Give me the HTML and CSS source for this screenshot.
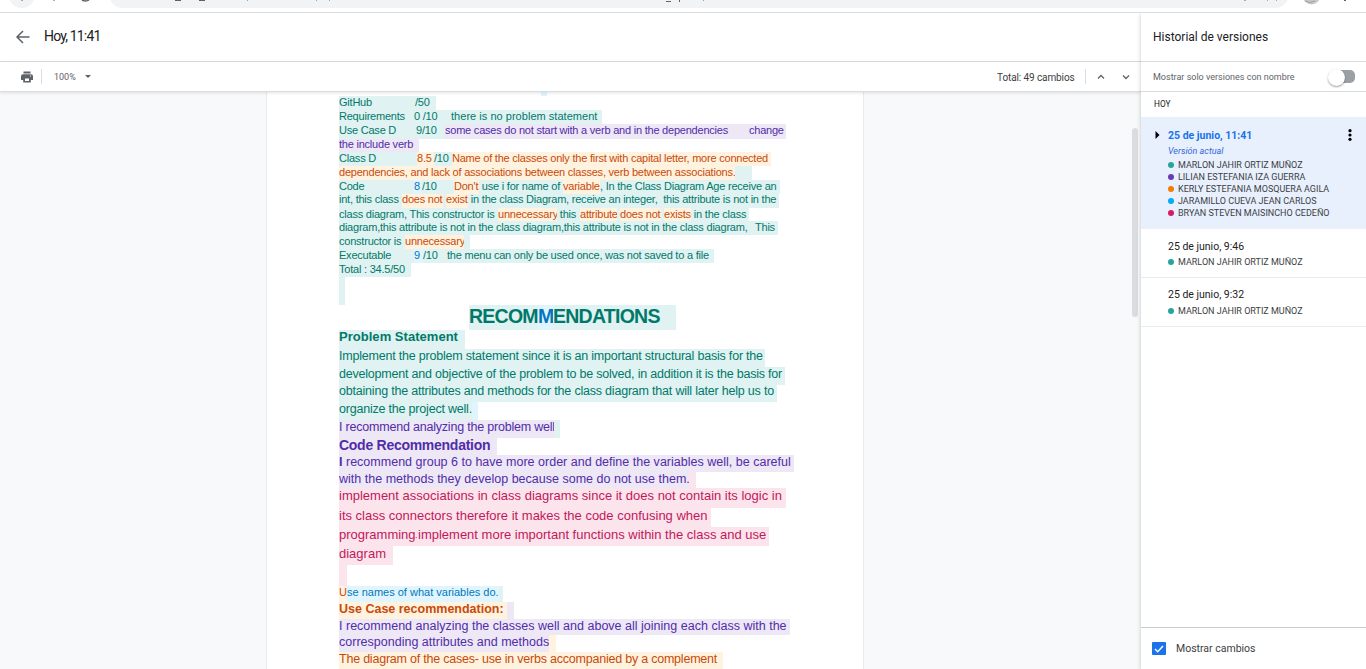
FILE: index.html
```html
<!DOCTYPE html>
<html lang="es">
<head>
<meta charset="utf-8">
<title>Historial de versiones</title>
<link rel="stylesheet" href="styles.css">
</head>
<body>
<svg class="browser" width="1366" height="13">
  <circle cx="22" cy="-5" r="13" fill="#f1f3f4"/>
  <rect x="109" y="-20" width="1180" height="28" rx="14" fill="#f1f3f4"/>
  <g fill="none" stroke="#5f6368" stroke-width="1">
    <path d="M22 0v1M54 0v1M175 0.500h5M180.500 0v1M199 0.500h5M204.500 0v1M666 1.500h5M679.500 0v2M1245 0v1M1267 0h1M1276 0h1"/>
    <path d="M82 0q4 2 7 0" stroke-width="1.500"/>
  </g>
  <path d="M247.500 0v1M316.500 0v1M329.500 0v1M703.500 0v1" stroke="#7dabd5" fill="none"/>
  <circle cx="1311.500" cy="-4" r="8.500" fill="#c4c8c9"/>
  <path d="M1305 1q5 3 10 0" stroke="#9da3a5" fill="none"/>
  <rect x="1344" y="0" width="2" height="1" fill="#5f6368"/>
</svg>
<div class="app">
  <main class="viewer">
    <header class="titlebar">
      <svg width="24" height="24" viewBox="0 0 24 24"><path d="M18.500 12H6.500M12 6l-6 6 6 6" fill="none" stroke="#5f6368" stroke-width="1.500"/></svg>
      <h1>Hoy, 11:41</h1>
    </header>
    <div class="toolbar">
      <svg class="print" width="12" height="12" viewBox="0 0 12 12"><path fill="#5f6368" d="M2.500 0.500h7v2h-7zM2 3.200h8a2 2 0 0 1 2 2V9H9.800V7H2.200v2H0V5.200a2 2 0 0 1 2-2zM2.200 7h7.600v4.500H2.200z"/><path fill="#fff" d="M4 7.500h4v2.500H4zM9 4.500h1v1H9z"/></svg>
      <i class="rule"></i>
      <span class="zoom">100%</span>
      <i class="caret"></i>
      <span class="total">Total: 49 cambios</span>
      <i class="rule"></i>
      <svg class="up" width="8" height="6" viewBox="0 0 8 6"><path d="M1 4.500l3-3 3 3" fill="none" stroke="#5f6368" stroke-width="1.300"/></svg>
      <svg class="down" width="8" height="6" viewBox="0 0 8 6"><path d="M1 1.500l3 3 3-3" fill="none" stroke="#5f6368" stroke-width="1.300"/></svg>
    </div>
    <div class="canvas">
      <article class="page">
        <p class="line first"><span></span><span class="blue"></span></p>
        <p class="line github"><span class="teal">GitHub</span><span class="teal">/50</span></p>
        <p class="line requirements"><span class="teal">Requirements</span><span class="teal">0 /10</span><span class="teal wide">there is no problem statement</span></p>
        <p class="line usecase"><span class="teal">Use Case D</span><span class="teal">9/10</span><span class="violet">some cases do not start with a verb and in the dependencies</span><span class="violet">change</span></p>
        <p class="line include"><span class="violet">the include verb</span></p>
        <p class="line classd"><span class="teal">Class D</span><span class="orange">8.5</span><span class="teal">/10</span><span class="orange">Name of the classes only the first with capital letter, more connected</span></p>
        <p class="line dependencies"><span class="orange">dependencies, and lack of associations between classes, verb between associations.</span><span class="teal"></span></p>
        <p class="line code"><span class="teal">Code</span><span class="blue">8</span><span class="teal">/10</span><span class="orange">Don't</span><span class="teal"> use i for name of </span><span class="orange">variable</span><span class="teal">, In the Class Diagram Age receive an</span></p>
        <p class="line int"><span class="teal">int, this class </span><span class="orange">does not</span><span class="teal"></span><span class="orange">exist</span><span class="teal"> in the class Diagram, receive an integer,  this attribute is not in the</span></p>
        <p class="line diagram1"><span class="teal">class diagram, This constructor is</span><span class="orange">unnecessary</span><span class="teal"> this </span><span class="orange">attribute</span><span class="teal"></span><span class="orange">does not</span><span class="teal"></span><span class="orange">exists</span><span class="teal"> in the class</span></p>
        <p class="line diagram2"><span class="teal">diagram,this attribute is not in the class diagram,this attribute is not in the class diagram,</span><span class="teal">This</span></p>
        <p class="line constructor"><span class="teal">constructor is </span><span class="orange">unnecessary</span><span class="teal"></span></p>
        <p class="line executable"><span class="teal">Executable</span><span class="blue">9</span><span class="teal">/10</span><span class="teal">the menu can only be used once, was not saved to a file</span></p>
        <p class="line sum"><span class="teal">Total : 34.5/50</span></p>
        <p class="line blank"><span class="teal"></span></p>
        <h2 class="line heading"><span></span><span class="teal">RECOM</span><span class="blue">M</span><span class="teal">ENDATIONS</span></h2>
        <h3 class="line problem"><span class="teal">Problem Statement</span></h3>
        <p class="line p1"><span class="teal">Implement the problem statement since it is an important structural basis for the</span></p>
        <p class="line p2"><span class="teal">development and objective of the problem to be solved, in addition it is the basis for</span></p>
        <p class="line p3"><span class="teal">obtaining the attributes and methods for the class diagram that will later help us to</span></p>
        <p class="line p4"><span class="teal">organize the project well.</span><span class="blue"></span></p>
        <p class="line p5"><span class="violet">I recommend analyzing the problem well</span><span class="teal"></span></p>
        <h3 class="line coderec"><span class="violet">Code Recommendation</span></h3>
        <p class="line c1"><span class="violet"><b>I</b> recommend group 6 to have more order and define the variables well, be careful</span></p>
        <p class="line c2"><span class="violet">with the methods they develop because some do not use them.</span><span class="pink"></span></p>
        <p class="line d1"><span class="pink">implement associations in class diagrams since it does not contain its logic in</span></p>
        <p class="line d2"><span class="pink">its class connectors therefore it makes the code confusing when</span></p>
        <p class="line d3"><span class="pink">programming</span><span class="pink dot">.</span><span class="pink">implement more important functions within the class and use</span></p>
        <p class="line d4"><span class="pink">diagram</span></p>
        <p class="line blank2"><span class="pink"></span></p>
        <p class="line names"><span class="orange">U</span><span class="blue">se names of what variables do.</span><span class="teal"></span></p>
        <h3 class="line userec"><span class="orange">Use Case recommendation:</span><span class="violet"></span></h3>
        <p class="line e1"><span class="violet">I recommend analyzing the classes well and above all joining each class with the</span></p>
        <p class="line e2"><span class="violet">corresponding attributes and methods</span><span class="orange"></span></p>
        <p class="line e3"><span class="orange">The diagram of the cases- use in verbs accompanied by a complement</span></p>
      </article>
      <i class="scrollbar"></i>
    </div>
  </main>
  <aside class="history">
    <h2 class="side-title">Historial de versiones</h2>
    <div class="filter">Mostrar solo versiones con nombre<i class="switch"></i></div>
    <div class="day">HOY</div>
    <section class="version current">
      <svg class="expand" width="5" height="8" viewBox="0 0 5 8"><path d="M0.500 0L4.500 4L0.500 8z"/></svg>
      <div class="info">
        <h3>25 de junio, 11:41</h3>
        <em>Versión actual</em>
        <ul>
          <li class="c-teal">MARLON JAHIR ORTIZ MUÑOZ</li>
          <li class="c-violet">LILIAN ESTEFANIA IZA GUERRA</li>
          <li class="c-orange">KERLY ESTEFANIA MOSQUERA AGILA</li>
          <li class="c-blue">JARAMILLO CUEVA JEAN CARLOS</li>
          <li class="c-pink">BRYAN STEVEN MAISINCHO CEDEÑO</li>
        </ul>
      </div>
      <svg class="menu" width="4" height="12" viewBox="0 0 4 12"><circle cx="2" cy="1.700" r="1.600"/><circle cx="2" cy="6" r="1.600"/><circle cx="2" cy="10.300" r="1.600"/></svg>
    </section>
    <section class="version">
      <div class="info">
        <h3>25 de junio, 9:46</h3>
        <ul><li class="c-teal">MARLON JAHIR ORTIZ MUÑOZ</li></ul>
      </div>
    </section>
    <section class="version last">
      <div class="info">
        <h3>25 de junio, 9:32</h3>
        <ul><li class="c-teal">MARLON JAHIR ORTIZ MUÑOZ</li></ul>
      </div>
    </section>
    <footer class="changes">
      <svg width="14" height="13" viewBox="0 0 14 13"><rect width="14" height="13" rx="1" fill="#1a73e8"/><path d="M3 7l2.700 2.700L11 4" fill="none" stroke="#fff" stroke-width="1.500"/></svg>
      <span>Mostrar cambios</span>
    </footer>
  </aside>
</div>
</body>
</html>
```
FILE: styles.css
```css
* { box-sizing: border-box; }
body { margin: 0; height: 100vh; overflow: hidden; display: flex; flex-direction: column; background: #fff; font-family: Roboto, sans-serif; color: #3c4043; }
h1, h2, h3, p, ul { margin: 0; padding: 0; font-weight: 400; }
svg { display: block; flex: none; }
i { font-style: normal; flex: none; }

.browser { border-bottom: 1px solid #dadce0; }
.app { flex: 1; display: flex; min-height: 0; }
.viewer { width: 1141px; display: flex; flex-direction: column; }

.titlebar { height: 49px; display: flex; align-items: center; padding-left: 11px; border-bottom: 1px solid #dadce0; }
.titlebar h1 { margin-left: 9px; font-size: 14px; letter-spacing: -.84px; line-height: 20px; color: #202124; padding-bottom: 2px; }
.toolbar { height: 30px; display: flex; align-items: center; padding: 0 11px 0 21px; border-bottom: 1px solid #dadce0; font-size: 9px; color: #5f6368; position: relative; box-shadow: 0 1px 3px rgba(60, 64, 67, .15); z-index: 1; }
.rule { width: 1px; height: 15px; background: #dadce0; }
.print + .rule { margin-left: 8px; }
.zoom { margin-left: 12px; width: 31px; }
.caret { border: 3px solid transparent; border-top-color: #5f6368; border-bottom: 0; }
.total { margin-left: auto; margin-right: 10px; padding-top: 1px; font-size: 10px; letter-spacing: -.1px; color: #3c4043; width: 78px; white-space: nowrap; }
.up { margin-left: 11px; }
.down { margin-left: 17px; }

.canvas { flex: 1; min-height: 0; overflow: hidden; position: relative; background: #f8f9fa; padding-left: 266px; }
.page { width: 598px; height: 577px; padding-left: 72px; background: #fff; border: solid #e8eaed; border-width: 0 1px; }
.scrollbar { position: absolute; left: 1132px; top: 36px; width: 6px; height: 189px; border-radius: 3px; background: #dadce0; }

.line { display: grid; white-space: pre; font: 11px/12px "Liberation Sans", Arial, sans-serif; letter-spacing: -.22px; height: 14px; }
.teal { background: #e0f2f1; color: #00796b; }
.violet { background: #ede7f6; color: #512da8; }
.orange { background: #fff3e0; color: #c84a0a; }
.blue { background: #e1f5fe; color: #0277bd; }
.pink { background: #fce4ec; color: #c2185b; }

.first { height: 4px; grid-template-columns: 202px 6px; }
.github { grid-template-columns: 76px 21px; }
.requirements { grid-template-columns: 75px 37px 151px; }
.wide { letter-spacing: .03px; }
.usecase { height: 15px; grid-template-columns: 77px 29px 304px 37px; }
.include { height: 13px; grid-template-columns: 80px; line-height: 10px; }
.classd { grid-template-columns: 78px 17px 18px 319px; }
.dependencies { grid-template-columns: 396px 17px; }
.code { grid-template-columns: 75px 8px 32px 25px 84px 37px 180px; }
.int { grid-template-columns: 63px 41px 3px 22px 311px; line-height: 10px; }
.diagram1 { height: 13px; grid-template-columns: 159px 59px 23px 37px 3px 41px 3px 27px 58px; }
.diagram2 { grid-template-columns: 416px 23px; }
.constructor { grid-template-columns: 66px 59px 6px; }
.executable { grid-template-columns: 75px 9px 24px 267px; }
.sum { grid-template-columns: 72px; }
.blank { height: 28px; grid-template-columns: 6px; }
.heading { height: 25px; font-size: 19.500px; letter-spacing: -.75px; line-height: 22px; font-weight: 700; grid-template-columns: 130px 69px 15px 123px; }
.problem { height: 19px; font-size: 13px; letter-spacing: .03px; line-height: 13px; font-weight: 700; grid-template-columns: 126px; }
.p1, .p2, .p3, .p4, .p5 { font-size: 12.500px; letter-spacing: -.205px; line-height: 14px; height: 18px; }
.p1 { grid-template-columns: 426px; }
.p2 { grid-template-columns: 446px; }
.p3 { height: 17px; grid-template-columns: 438px; line-height: 13px; }
.p4 { grid-template-columns: 133px 6px; }
.p5 { grid-template-columns: 215px 6px; }
.coderec { height: 17px; font-size: 14px; letter-spacing: -.27px; line-height: 14px; font-weight: 700; grid-template-columns: 158px; }
.c1, .c2, .e1, .e2 { font-size: 12.500px; letter-spacing: .01px; line-height: 14px; }
.c1 { height: 17px; grid-template-columns: 455px; }
.c2 { height: 16px; grid-template-columns: 350px 7px; }
.d1, .d2, .d3, .d4 { font-size: 13px; letter-spacing: 0; line-height: 16px; height: 19px; }
.d1 { height: 20px; grid-template-columns: 447px; }
.d2 { grid-template-columns: 372px; }
.d3 { grid-template-columns: 76px 3px 351px; }
.dot { font-size: 9px; }
.d4 { grid-template-columns: 54px; }
.blank2 { height: 21px; grid-template-columns: 8px; }
.names { height: 16px; letter-spacing: 0; grid-template-columns: 8px 152px 4px; line-height: 13px; }
.userec { height: 17px; font-size: 12.500px; letter-spacing: 0; line-height: 14px; font-weight: 700; grid-template-columns: 168px 7px; }
.e1 { height: 16px; grid-template-columns: 451px; }
.e2 { height: 17px; grid-template-columns: 210px 7px; }
.e3 { height: 17px; font-size: 12.500px; line-height: 14px; grid-template-columns: 384px; }

.history { flex: 1; display: flex; flex-direction: column; position: relative; z-index: 2; background: #fff; box-shadow: 0 1px 4px rgba(60, 64, 67, .3); clip-path: inset(0 0 0 -5px); white-space: nowrap; }
.side-title { height: 49px; padding: 14px 0 0 12px; font-size: 12px; line-height: 20px; color: #202124; border-bottom: 1px solid #dadce0; }
.filter { height: 30px; display: flex; align-items: center; justify-content: space-between; padding: 0 11px 0 12px; font-size: 9px; color: #5f6368; border-bottom: 1px solid #dadce0; }
.switch { width: 26px; height: 13px; border-radius: 5px; background: linear-gradient(90deg, transparent 10px, #9aa0a6 10px); position: relative; }
.switch::before { content: ""; position: absolute; left: -1px; top: -1px; width: 17px; height: 17px; border-radius: 50%; background: #fff; box-shadow: 0 1px 2px rgba(0, 0, 0, .4); }
.day { height: 25px; padding: 6px 0 0 13px; font-size: 8.300px; line-height: 13px; color: #202124; }
.version { height: 49px; display: flex; padding: 11px 14px 0 27px; border-bottom: 1px solid #e8eaed; }
.version.last { padding-top: 10px; }
.version h3 { font-size: 10.500px; line-height: 14px; color: #202124; }
.current { height: 112px; background: #e8f0fe; border: 0; padding: 12px 14px 0 14px; }
.current .info { margin-left: 8px; flex: 1; }
.current h3 { font-weight: 700; color: #1a73e8; }
.expand { margin-top: 2px; }
em { display: block; font-size: 9px; line-height: 12px; padding-top: 2px; height: 16px; color: #3367d6; }
li { list-style: none; display: flex; align-items: center; gap: 4px; font-size: 9px; line-height: 12px; color: #3c4043; }
.version:not(.current) li { margin-top: 2px; }
.version.last li { margin-top: 3px; }
li::before { content: ""; width: 6px; height: 6px; border-radius: 50%; background: currentColor; }
.c-teal::before { background: #26a69a; }
.c-violet::before { background: #673ab7; }
.c-orange::before { background: #f57c00; }
.c-blue::before { background: #03a9f4; }
.c-pink::before { background: #d81b60; }
.changes { margin-top: auto; height: 42px; display: flex; align-items: center; gap: 10px; padding-left: 11px; border-top: 1px solid #c9cbce; font-size: 10.500px; color: #3c4043; }
```
